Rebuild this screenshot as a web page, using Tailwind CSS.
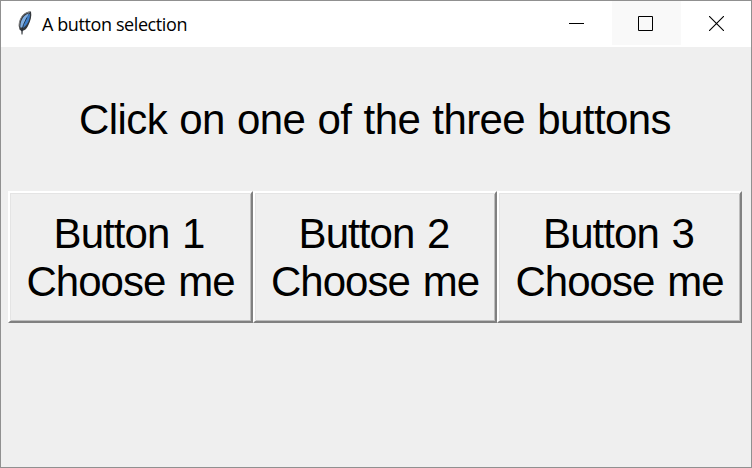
<!DOCTYPE html>
<html lang="en"><head><meta charset="utf-8"><title>A button selection</title>
<script src="https://cdn.jsdelivr.net/npm/@tailwindcss/browser@4"></script></head>
<body class="w-[752px] h-[468px] overflow-hidden">
<div class="w-full h-full border border-[#909090] bg-[#efefef] flex flex-col text-black">
<header class="h-[46px] bg-white flex items-center pl-[17px] shrink-0">
<svg class="w-[14px] h-[24px] -mt-[2px]" viewBox="0 0 14 24"><path d="M3.5 23.5L3.3 20L1.5 18.5C.2 14 1.3 9 4 5C7 1.5 10.5 0 13 .6C14 5 12.5 10.5 10 15C8.5 18 6.5 19.5 4.8 19.8L4.5 23.5Z" fill="#33373c"/><path d="M2.4 16.5C1.8 11 5 4 11 2.2L4.6 16.5Z" fill="#80aee0"/><path d="M4.6 17L8 7L12 2.5C12.3 8 9.5 14.5 4.6 17Z" fill="#3e7fcb"/><path d="M3.8 20L5.5 13.5L9 6.5" stroke="#202830" stroke-width=".8" fill="none"/><path d="M1 15.5C1 9 4 4 8 2L12 1" stroke="#858585" stroke-width="1" fill="none"/></svg>
<h1 class="ml-[10px] text-[18px] leading-6 tracking-[-0.4px] font-['Open_Sans',sans-serif] flex-1 whitespace-nowrap">A button selection</h1>
<div class="flex h-full">
<div class="w-[70px] pt-[15px] pl-[27px]"><svg class="w-[15px] h-[15px]" viewBox="0 0 15 15" shape-rendering="crispEdges"><path d="M0 7.5H15" stroke="#000"/></svg></div>
<div class="w-[69px] h-[44px] bg-[#f9f9f9] pt-[15px] pl-[26px]"><svg class="w-[15px] h-[15px]" viewBox="0 0 15 15"><path d="M.5 .5H14.5V14.5H.5Z" stroke="#000" fill="none"/></svg></div>
<div class="w-[70px] pt-[15px] pl-[28px]"><svg class="w-[15px] h-[15px]" viewBox="0 0 15 15"><path d="M0 0L15 15M15 0L0 15" stroke="#000" stroke-width="1.1" fill="none"/></svg></div>
</div></header>
<main class="font-['Liberation_Sans',Arial,sans-serif] text-[42px] leading-[48px]">
<p class="mt-[49px] pr-[2px] text-center whitespace-nowrap tracking-[-0.6px] [word-spacing:1.15px]">Click on one of the three buttons</p>
<div class="mt-[47px] ml-[7px] flex tracking-[-0.95px] [&_span]:[word-spacing:2px]">
<button class="w-[245px] h-[132px] pt-[2px] border-2 border-t-white border-l-white border-b-[#808080] border-r-[#808080] shadow-[inset_1px_1px_#e4e4e4,inset_-1px_-1px_#bdbdbd]"><span class="block pr-[3px]">Button 1</span><span class="block">Choose me</span></button>
<button class="w-[244px] h-[132px] pt-[2px] border-2 border-t-white border-l-white border-b-[#808080] border-r-[#808080] shadow-[inset_1px_1px_#e4e4e4,inset_-1px_-1px_#bdbdbd]"><span class="block pr-[2px]">Button 2</span><span class="block">Choose me</span></button>
<button class="w-[245px] h-[132px] pt-[2px] border-2 border-t-white border-l-white border-b-[#808080] border-r-[#808080] shadow-[inset_1px_1px_#e4e4e4,inset_-1px_-1px_#bdbdbd]"><span class="block pr-[2px]">Button 3</span><span class="block">Choose me</span></button>
</div></main></div></body></html>
